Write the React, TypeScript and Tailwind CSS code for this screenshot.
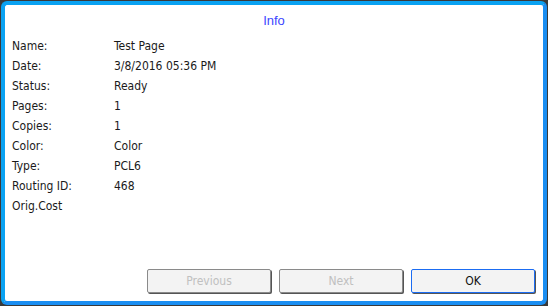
import React from "react";

const rows: [string, string][] = [
  ["Name:", "Test Page"],
  ["Date:", "3/8/2016 05:36 PM"],
  ["Status:", "Ready"],
  ["Pages:", "1"],
  ["Copies:", "1"],
  ["Color:", "Color"],
  ["Type:", "PCL6"],
  ["Routing ID:", "468"],
  ["Orig.Cost", ""],
];

const Button = ({ label, primary, disabled }: { label: string; primary?: boolean; disabled?: boolean }) => (
  <button
    className={
      "h-[24px] w-[124px] rounded-[2px] border bg-[#f3f3f3] text-[12px] leading-none shadow-[1px_1px_0_#555] " +
      (primary ? "border-[#1b6cf2] text-[#111]" : "border-[#8a8a8a] text-[#c0c0c0]")
    }
    disabled={disabled}
  >
    {label}
  </button>
);

export default function App() {
  return (
    <div
      className="h-[306px] w-[548px] bg-[#3a3a3a] p-px"
      style={{ fontFamily: '"DejaVu Sans Condensed", "DejaVu Sans", sans-serif' }}
    >
      <div className="flex h-full flex-col rounded-[6px] border-4 border-[#0aa2f2] border-r-[#1a8ef2] border-b-[#1a8ef2] bg-white">
        <div
          className="mt-[6px] h-[20px] text-center text-[13px] leading-[20px] text-[#3c46ff]"
          style={{ fontFamily: '"Liberation Sans", Arial, sans-serif' }}
        >
          Info
        </div>
        <div className="mt-[5px] flex flex-col pl-[7px] text-[12px] text-[#1a1a1a]">
          {rows.map(([k, v]) => (
            <div key={k} className="flex h-[20px] items-center">
              <span className="w-[102px]">{k}</span>
              <span>{v}</span>
            </div>
          ))}
        </div>
        <div className="flex-1" />
        <div className="mb-[8px] flex justify-end gap-[8px] pr-[8px]">
          <Button label="Previous" disabled />
          <Button label="Next" disabled />
          <Button label="OK" primary />
        </div>
      </div>
    </div>
  );
}
